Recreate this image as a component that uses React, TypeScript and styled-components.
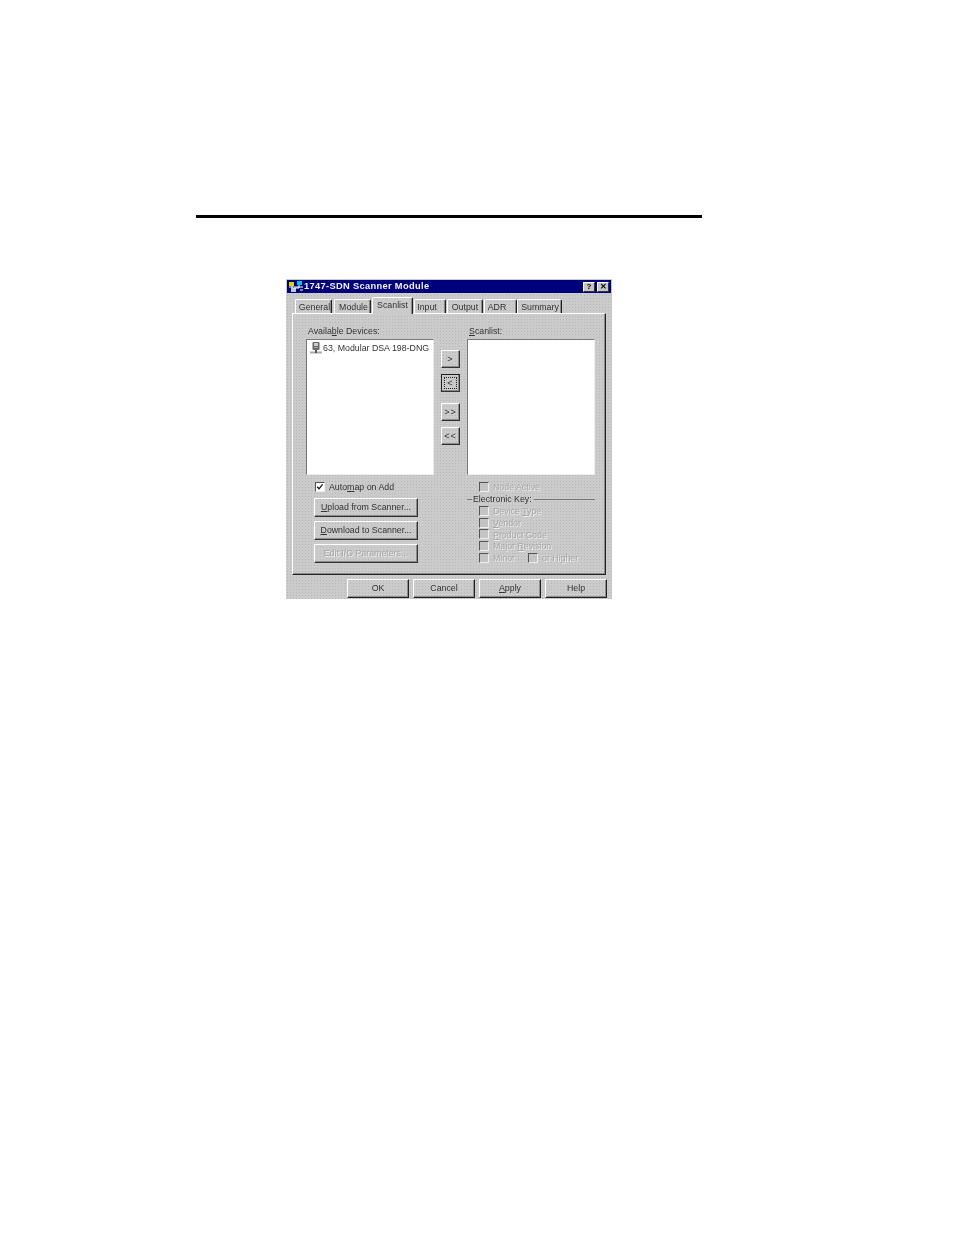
import React from "react";
import styled, { createGlobalStyle } from "styled-components";

const Global = createGlobalStyle`
  html, body { margin: 0; padding: 0; background: #fff; }
  body { font-family: "Liberation Sans", Arial, sans-serif; }
`;

const Page = styled.div`
  width: 954px;
  height: 1235px;
  padding-top: 215px;
  box-sizing: border-box;
  overflow: hidden;
`;

const Rule = styled.div`
  width: 506px;
  height: 3px;
  margin-left: 196px;
  background: #000;
`;

const Dialog = styled.div`
  width: 326px;
  height: 320px;
  margin: 61px 0 0 286px;
  box-sizing: border-box;
  padding: 1px;
  background-color: #cbcbcb;
  background-image: radial-gradient(#b8b8b8 0.55px, transparent 0.7px);
  background-size: 3px 3px;
  color: #333;
  font-size: 8.8px;
  line-height: 12px;
  filter: blur(0.3px);
`;

const TitleBar = styled.div`
  height: 13px;
  width: 324px;
  background: #00007c;
  color: #f2f2f2;
  display: flex;
  align-items: center;
  padding: 0 2px 0 2px;
  box-sizing: border-box;
  font-weight: bold;
  font-size: 9.3px;
  letter-spacing: 0.33px;
  white-space: nowrap;
`;

const TitleText = styled.span`
  flex: 1;
  margin-left: -1px;
  padding-bottom: 1px;
`;

const WinButton = styled.div`
  width: 12px;
  height: 10px;
  margin-left: 2px;
  background: #c6c6c6;
  border-top: 1px solid #fff;
  border-left: 1px solid #fff;
  border-right: 1px solid #333;
  border-bottom: 1px solid #333;
  box-sizing: border-box;
  color: #000;
  display: flex;
  align-items: center;
  justify-content: center;
  font-size: 8px;
  line-height: 8px;
  letter-spacing: 0;
`;

const Tabs = styled.div`
  display: flex;
  align-items: flex-end;
  height: 19px;
  padding-left: 8px;
  margin-top: 1px;
  box-sizing: border-box;
`;

const Tab = styled.div<{ $w: number; $active?: boolean; $gap?: number; $nudge?: number }>`
  position: relative;
  z-index: ${(p) => (p.$active ? 2 : 1)};
  width: ${(p) => p.$w}px;
  margin-left: ${(p) => p.$gap ?? 0}px;
  height: ${(p) => (p.$active ? 17 : 14)}px;
  margin-bottom: ${(p) => (p.$active ? -1 : 0)}px;
  box-sizing: border-box;
  border-top: 1px solid #fff;
  border-left: 1px solid #fff;
  border-right: 1px solid #222;
  box-shadow: inset -1px 0 0 #8a8a8a;
  border-radius: 2px 2px 0 0;
  text-align: center;
  padding-left: ${(p) => Math.max(p.$nudge ?? 0, 0)}px;
  padding-right: ${(p) => Math.max(-(p.$nudge ?? 0), 0)}px;
  line-height: ${(p) => (p.$active ? 14 : 15)}px;
  background-color: ${(p) => (p.$active ? "#cbcbcb" : "transparent")};
  white-space: nowrap;
`;

const Panel = styled.div`
  width: 314px;
  height: 262px;
  margin-left: 5px;
  box-sizing: border-box;
  border-top: 1px solid #fff;
  border-left: 1px solid #fff;
  border-right: 1px solid #222;
  border-bottom: 1px solid #222;
  box-shadow: inset -1px -1px 0 #8a8a8a;
  padding: 11px 0 0 13px;
`;

const TopRow = styled.div`
  display: flex;
`;

const ListColumn = styled.div`
  width: 128px;
`;

const FieldLabel = styled.div<{ $indent: number }>`
  height: 14px;
  padding-left: ${(p) => p.$indent}px;
  line-height: 12px;
`;

const ListBox = styled.div`
  height: 136px;
  box-sizing: border-box;
  background: #fff;
  border-top: 1px solid #777;
  border-left: 1px solid #777;
  border-right: 1px solid #eee;
  border-bottom: 1px solid #eee;
  padding: 2px 0 0 3px;
`;

const ListItem = styled.div`
  display: flex;
  align-items: center;
  white-space: nowrap;
  height: 12px;
`;

const MoveColumn = styled.div`
  width: 33px;
  padding: 25px 0 0 7px;
  box-sizing: border-box;
  display: flex;
  flex-direction: column;
`;

const MoveButton = styled.div<{ $focus?: boolean; $top: number }>`
  width: 19px;
  height: 18px;
  margin-top: ${(p) => p.$top}px;
  box-sizing: border-box;
  border-top: 1px solid ${(p) => (p.$focus ? "#222" : "#fff")};
  border-left: 1px solid ${(p) => (p.$focus ? "#222" : "#fff")};
  border-right: 1px solid #333;
  border-bottom: 1px solid #333;
  box-shadow: inset -1px -1px 0 #8a8a8a;
  display: flex;
  align-items: center;
  justify-content: center;
  letter-spacing: 1px;
  font-size: 9px;
`;

const FocusBox = styled.span`
  border: 1px dotted #222;
  width: 11px;
  height: 10px;
  display: flex;
  align-items: center;
  justify-content: center;
`;

const BottomRow = styled.div`
  display: flex;
`;

const LeftLower = styled.div`
  width: 161px;
  padding-left: 8px;
  box-sizing: border-box;
`;

const RightLower = styled.div`
  width: 128px;
`;

const CheckRow = styled.div<{ $indent: number; $top?: number; $h?: number }>`
  display: flex;
  align-items: center;
  height: ${(p) => p.$h ?? 12}px;
  padding-left: ${(p) => p.$indent}px;
  margin-top: ${(p) => p.$top ?? 0}px;
  white-space: nowrap;
`;

const Box = styled.span<{ $disabled?: boolean; $left?: number }>`
  display: flex;
  align-items: center;
  justify-content: center;
  width: 10px;
  height: 10px;
  box-sizing: border-box;
  margin-left: ${(p) => p.$left ?? 0}px;
  margin-right: 4px;
  flex: none;
  background: ${(p) => (p.$disabled ? "#c4c4c4" : "#fff")};
  border-top: 1px solid #555;
  border-left: 1px solid #555;
  border-right: 1px solid #eee;
  border-bottom: 1px solid #eee;
`;

const Disabled = styled.span`
  color: #a8a8a8;
  text-shadow: 1px 1px 0 #eee;
`;

const ActionButton = styled.div<{ $top: number }>`
  width: 104px;
  height: 19px;
  margin-top: ${(p) => p.$top}px;
  box-sizing: border-box;
  border-top: 1px solid #fff;
  border-left: 1px solid #fff;
  border-right: 1px solid #333;
  border-bottom: 1px solid #333;
  box-shadow: inset -1px -1px 0 #8a8a8a;
  padding-bottom: 1px;
  display: flex;
  align-items: center;
  justify-content: center;
  white-space: nowrap;
`;

const KeyGroup = styled.div`
  display: flex;
  align-items: center;
  height: 12px;
`;

const KeyTick = styled.span`
  width: 5px;
  height: 1px;
  background: #777;
  margin-right: 1px;
`;

const KeyLine = styled.span`
  flex: 1;
  height: 1px;
  background: #777;
  margin-left: 2px;
`;

const Footer = styled.div`
  display: flex;
  width: 320px;
  justify-content: flex-end;
  gap: 4px;
  margin-top: 4px;
`;

const FooterButton = styled.div`
  width: 62px;
  height: 19px;
  box-sizing: border-box;
  border-top: 1px solid #fff;
  border-left: 1px solid #fff;
  border-right: 1px solid #222;
  border-bottom: 1px solid #222;
  box-shadow: inset -1px -1px 0 #8a8a8a;
  padding-bottom: 2px;
  display: flex;
  align-items: center;
  justify-content: center;
`;

const Mn = styled.span`
  text-decoration: underline;
`;

const NetworkIcon = () => (
  <svg width="16" height="12" viewBox="0 0 16 12">
    <rect x="0" y="1" width="5" height="4" fill="#d8d800" />
    <rect x="8" y="0" width="5" height="4" fill="#00c8c8" />
    <rect x="2" y="7" width="5" height="4" fill="#c8c8c8" />
    <path d="M3 5v2M10 4v3H5M0 6h14" stroke="#fff" strokeWidth="1" fill="none" />
    <rect x="11" y="8" width="3" height="2" fill="#888" />
  </svg>
);

const DeviceIcon = () => (
  <svg width="13" height="12" viewBox="0 0 13 12">
    <rect x="2.5" y="0" width="7" height="8" rx="1" fill="#666" />
    <rect x="4" y="1" width="4" height="3" fill="#ccc" />
    <rect x="4" y="5" width="4" height="1" fill="#aaa" />
    <path d="M0 10.5h12" stroke="#aaa" strokeWidth="2" />
    <path d="M6 8v3" stroke="#555" strokeWidth="2" />
  </svg>
);

const Check = () => (
  <svg width="8" height="8" viewBox="0 0 8 8">
    <path d="M1.2 3.8l1.8 2 3.6-4.4" stroke="#111" strokeWidth="1.3" fill="none" />
  </svg>
);

const keyRows = [
  <>Device <Mn>T</Mn>ype</>,
  <><Mn>V</Mn>endor</>,
  <><Mn>P</Mn>roduct Code</>,
  <>Major <Mn>R</Mn>evision</>,
];

export default function App() {
  return (
    <Page>
      <Global />
      <Rule />
      <Dialog>
        <TitleBar>
          <NetworkIcon />
          <TitleText>1747-SDN Scanner Module</TitleText>
          <WinButton><b>?</b></WinButton>
          <WinButton><b>✕</b></WinButton>
        </TitleBar>
        <Tabs>
          <Tab $w={37} $nudge={2}>General</Tab>
          <Tab $w={37} $gap={2} $nudge={2}>Module</Tab>
          <Tab $w={41} $gap={1} $active>Scanlist</Tab>
          <Tab $w={32} $gap={1} $nudge={-6}>Input</Tab>
          <Tab $w={36} $gap={1}>Output</Tab>
          <Tab $w={33} $gap={1} $nudge={-7}>ADR</Tab>
          <Tab $w={45} $nudge={1}>Summary</Tab>
        </Tabs>
        <Panel>
          <TopRow>
            <ListColumn>
              <FieldLabel $indent={2}>Availa<Mn>b</Mn>le Devices:</FieldLabel>
              <ListBox>
                <ListItem><DeviceIcon />63, Modular DSA 198-DNG</ListItem>
              </ListBox>
            </ListColumn>
            <MoveColumn>
              <MoveButton $top={0}>&gt;</MoveButton>
              <MoveButton $top={6} $focus><FocusBox>&lt;</FocusBox></MoveButton>
              <MoveButton $top={11}>&gt;&gt;</MoveButton>
              <MoveButton $top={6}>&lt;&lt;</MoveButton>
            </MoveColumn>
            <ListColumn>
              <FieldLabel $indent={2}><Mn>S</Mn>canlist:</FieldLabel>
              <ListBox />
            </ListColumn>
          </TopRow>
          <BottomRow>
            <LeftLower>
              <CheckRow $indent={1} $top={6}><Box><Check /></Box>Auto<Mn>m</Mn>ap on Add</CheckRow>
              <ActionButton $top={5}><span><Mn>U</Mn>pload from Scanner...</span></ActionButton>
              <ActionButton $top={4}><span><Mn>D</Mn>ownload to Scanner...</span></ActionButton>
              <ActionButton $top={4}><Disabled>Edit I/O Parameters...</Disabled></ActionButton>
            </LeftLower>
            <RightLower>
              <CheckRow $indent={12} $top={6}><Box $disabled /><Disabled>Node Active</Disabled></CheckRow>
              <KeyGroup><KeyTick />Electronic Key:<KeyLine /></KeyGroup>
              {keyRows.map((label, i) => (
                <CheckRow key={i} $indent={12} $h={11.8}>
                  <Box $disabled /><Disabled>{label}</Disabled>
                </CheckRow>
              ))}
              <CheckRow $indent={12} $h={11.8}>
                <Box $disabled /><Disabled>Minor</Disabled>
                <Box $disabled $left={13} /><Disabled>or Higher</Disabled>
              </CheckRow>
            </RightLower>
          </BottomRow>
        </Panel>
        <Footer>
          <FooterButton>OK</FooterButton>
          <FooterButton>Cancel</FooterButton>
          <FooterButton><span><Mn>A</Mn>pply</span></FooterButton>
          <FooterButton>Help</FooterButton>
        </Footer>
      </Dialog>
    </Page>
  );
}
